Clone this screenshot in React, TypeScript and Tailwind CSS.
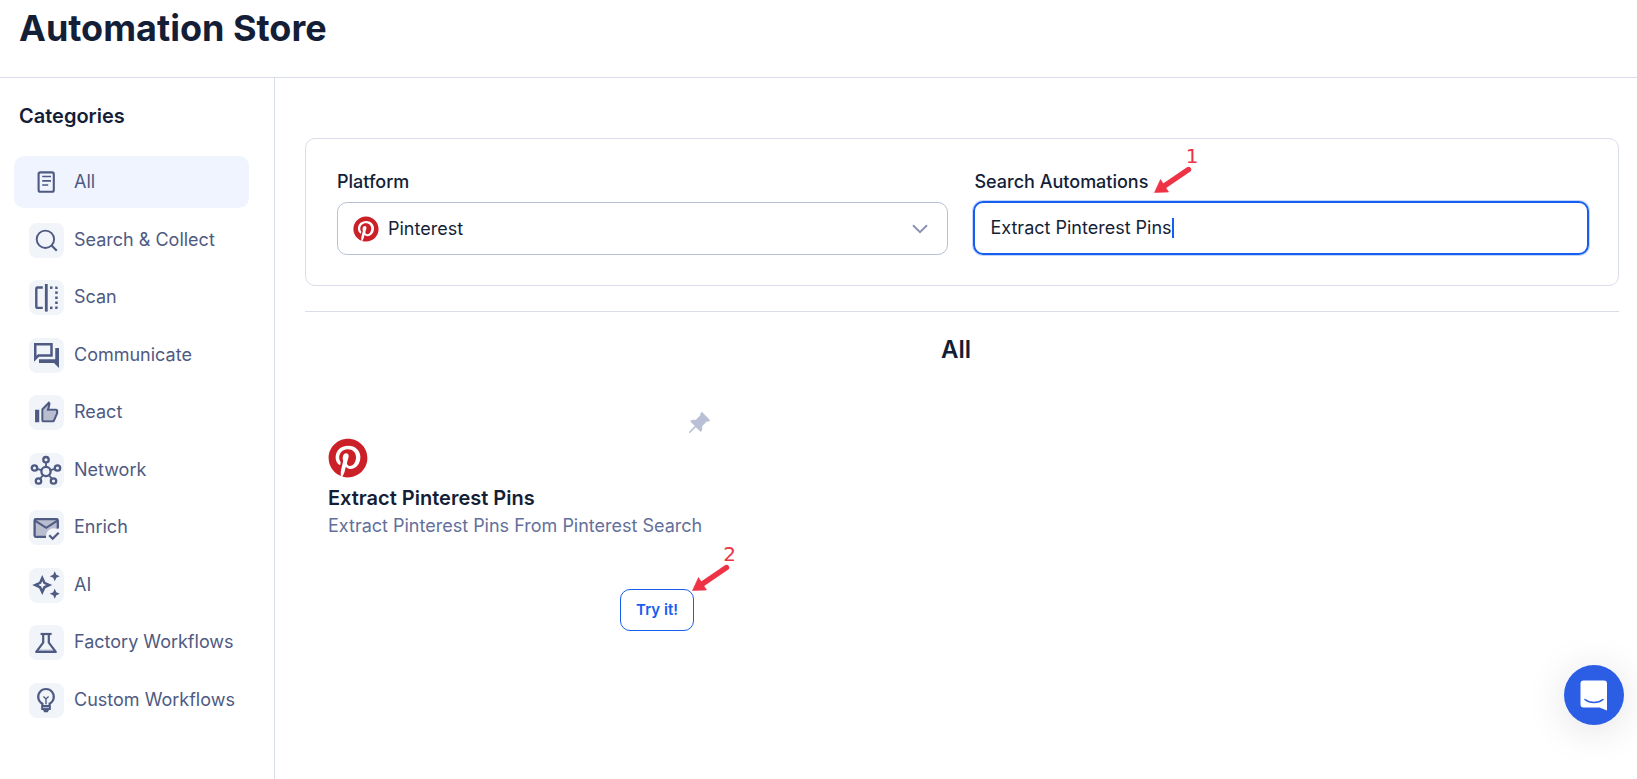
import { useState } from "react";
import type { ReactNode } from "react";
import { FaPinterest } from "react-icons/fa";
import { BsPinAngleFill } from "react-icons/bs";

const iconProps = {
  viewBox: "0 0 35 35",
  className: "size-[35px]",
  fill: "none",
  stroke: "currentColor",
  "aria-hidden": true,
} as const;

const ListIcon = () => (
  <svg {...iconProps} strokeWidth={2.1}>
    <rect x="9.6" y="7.4" width="15.2" height="19.4" rx="1.8" />
    <path d="M13.2 11.5h8.8M13.2 15.8h8.8M13.2 20h6" strokeWidth={1.7} />
  </svg>
);

const SearchIcon = () => (
  <svg {...iconProps} strokeWidth={1.9}>
    <circle cx="16.4" cy="16.3" r="8.7" />
    <path d="M22.6 22.5l5.2 5.2" strokeWidth={2.2} />
  </svg>
);

const ScanIcon = () => (
  <svg {...iconProps} strokeWidth={2.4}>
    <path d="M13.8 7.5H8.5a1.2 1.2 0 0 0-1.2 1.2v18a1.2 1.2 0 0 0 1.2 1.2h5.3" />
    <path d="M17.3 4v27.6" strokeWidth={2.8} />
    <g fill="currentColor" stroke="none">
      <rect x="21" y="6.4" width="2.5" height="2.5" />
      <rect x="21" y="26.6" width="2.5" height="2.5" />
      <path d="M26.2 6.4h1.2a1.3 1.3 0 0 1 1.3 1.3v1.2h-2.5z" />
      <rect x="26.2" y="11.4" width="2.5" height="2.5" />
      <rect x="26.2" y="16.5" width="2.5" height="2.5" />
      <rect x="26.2" y="21.5" width="2.5" height="2.5" />
      <path d="M26.2 29.1h1.2a1.3 1.3 0 0 0 1.3-1.3v-1.2h-2.5z" />
    </g>
  </svg>
);

const ForumIcon = () => (
  <svg {...iconProps} fill="currentColor" stroke="none">
    <path
      transform="translate(2.5 2.5) scale(1.25)"
      d="M15 4v7H5.17L4 12.17V4h11m2-2H2v15l4-4h11V2zm5 4h-3v9H6v3h12l4 4V6z"
    />
  </svg>
);

const ThumbIcon = () => (
  <svg {...iconProps} fill="currentColor" stroke="none">
    <g transform="translate(5 5.3) scale(1.05)">
      <path d="M21 12v-2h-9l1.34-5.34L9 9v10h9z" opacity=".35" />
      <path d="M9 21h9c.83 0 1.54-.5 1.84-1.22l3.02-7.05c.09-.23.14-.47.14-.73v-2c0-1.1-.9-2-2-2h-6.31l.95-4.57.03-.32c0-.41-.17-.79-.44-1.06L14.17 1 7.58 7.59C7.22 7.95 7 8.45 7 9v10c0 1.1.9 2 2 2zM9 9l4.34-4.34L12 10h9v2l-3 7H9V9zM1 9h4v12H1z" />
    </g>
  </svg>
);

const NetworkIcon = () => (
  <svg {...iconProps} strokeWidth={2.3}>
    <circle cx="17" cy="18.5" r="4.6" />
    <circle cx="17" cy="6.7" r="2.7" />
    <circle cx="5.5" cy="15" r="2.7" />
    <circle cx="28.5" cy="15" r="2.7" />
    <circle cx="9.5" cy="28" r="2.7" />
    <circle cx="24.5" cy="28" r="2.7" />
    <path d="M17 9.4v4.5M8 15.8l4.6 1.4M26 15.8l-4.6 1.4M11 25.8l3.2-3.8M23 25.8L19.8 22" strokeWidth={1.8} />
  </svg>
);

const EnrichIcon = () => (
  <svg {...iconProps}>
    <rect x="5.6" y="9.2" width="23.2" height="17.6" fill="currentColor" fillOpacity=".35" stroke="none" />
    <circle cx="24.8" cy="26" r="7.8" fill="#f1f4f9" stroke="none" />
    <path
      d="M17 26.8H6.8a1.2 1.2 0 0 1-1.2-1.2V10.4a1.2 1.2 0 0 1 1.2-1.2h20.8a1.2 1.2 0 0 1 1.2 1.2v8"
      strokeWidth={2.3}
    />
    <path d="M6 10.6l11.2 7.2 11.2-7.2" strokeWidth={2} />
    <path d="M20.2 25.2l3.5 3.5 6-6" strokeWidth={2.3} />
  </svg>
);

const SparkIcon = () => (
  <svg {...iconProps} fill="currentColor" stroke="none">
    <path
      transform="translate(2 2) scale(1.25)"
      d="M19 9l1.25-2.75L23 5l-2.75-1.25L19 1l-1.25 2.75L15 5l2.75 1.25L19 9zM19 15l-1.25 2.75L15 19l2.75 1.25L19 23l1.25-2.75L23 19l-2.75-1.25L19 15zM11.5 9.5L9 4 6.5 9.5 1 12l5.5 2.5L9 20l2.5-5.5L17 12l-5.5-2.5zM9.99 12.99L9 15.17l-.99-2.18L5.83 12l2.18-.99L9 8.83l.99 2.18 2.18.99-2.18.99z"
    />
  </svg>
);

const FlaskIcon = () => (
  <svg {...iconProps} strokeWidth={2.2}>
    <path d="M11.6 9h11" />
    <path d="M14.2 9.5v8.2L7.2 26.9h19.6l-7-9.2V9.5" strokeLinejoin="round" />
    <path d="M9 25.2h16" strokeWidth={1.4} strokeOpacity=".35" />
  </svg>
);

const BulbIcon = () => (
  <svg {...iconProps} strokeWidth={2.2}>
    <path d="M13.4 22.2v-1.5a7.8 7.8 0 1 1 7.2 0v1.5" />
    <path d="M14.4 13.6l2.6 2.3 2.6-2.3M17 15.9v5.3" strokeWidth={1.4} />
    <path d="M12.2 22h9.6v5H20l-1.2 2.3h-3.6L14 27h-1.8z" fill="currentColor" stroke="none" />
    <path d="M14 24.6h6" stroke="#f1f4f9" strokeOpacity=".7" strokeWidth={1} />
  </svg>
);

const categories: { name: string; icon: ReactNode }[] = [
  { name: "All", icon: <ListIcon /> },
  { name: "Search & Collect", icon: <SearchIcon /> },
  { name: "Scan", icon: <ScanIcon /> },
  { name: "Communicate", icon: <ForumIcon /> },
  { name: "React", icon: <ThumbIcon /> },
  { name: "Network", icon: <NetworkIcon /> },
  { name: "Enrich", icon: <EnrichIcon /> },
  { name: "AI", icon: <SparkIcon /> },
  { name: "Factory Workflows", icon: <FlaskIcon /> },
  { name: "Custom Workflows", icon: <BulbIcon /> },
];

function StepMarker({ step }: { step: number }) {
  return (
    <span className="pointer-events-none flex flex-col text-[#ee3345]">
      <span className="self-end font-['DejaVu_Sans',sans-serif] text-xl leading-[18px]">{step}</span>
      <svg viewBox="0 0 40 28" className="mr-1 h-7 w-10" aria-hidden="true">
        <path d="M34.5 4.5L11 20.5" stroke="currentColor" strokeWidth="5.4" strokeLinecap="round" />
        <path d="M0.5 27.5L6.5 14.5L14.5 27z" fill="currentColor" stroke="currentColor" strokeWidth="0.6" />
      </svg>
    </span>
  );
}

export default function App() {
  const [active, setActive] = useState("All");
  const [query, setQuery] = useState("Extract Pinterest Pins");

  return (
    <div className="flex min-h-screen flex-col bg-white font-['Inter',sans-serif] text-[#141e37]">
      <header className="border-b border-[#d9dce9] px-[19px] pt-2 pb-[29px]">
        <h1 className="text-4xl leading-10 font-bold">Automation Store</h1>
      </header>

      <div className="flex flex-1">
        <aside className="w-[275px] shrink-0 border-r border-[#d9dce9] pt-6 pr-[25px] pl-[14px]">
          <h2 className="pl-[5px] text-xl leading-7 font-semibold">Categories</h2>
          <nav className="mt-[26px] flex flex-col">
            {categories.map(({ name, icon }) => (
              <button
                key={name}
                type="button"
                onClick={() => setActive(name)}
                className={`flex h-[52px] items-center gap-[10px] rounded-[10px] pl-[15px] text-left text-lg text-[#4e5a82] odd:mb-[6px] even:mb-[5px] ${
                  active === name ? "bg-[#eff4ff]" : "bg-white"
                }`}
              >
                <span className={`rounded-lg text-[#4e5a82] ${active === name ? "" : "bg-[#f1f4f9]"}`}>{icon}</span>
                {name}
              </button>
            ))}
          </nav>
        </aside>

        <main className="min-w-0 flex-1">
          <div className="pt-[60px] pr-[18px] pl-[30px]">
            <form
              className="grid grid-cols-[611fr_615fr] gap-[25px] rounded-[10px] border border-[#d9dce9] py-[30px] pr-[29px] pl-[31px]"
              onSubmit={(e) => e.preventDefault()}
            >
              <div className="flex flex-col gap-[7px]">
                <label htmlFor="platform" className="text-lg leading-[26px] font-medium">
                  Platform
                </label>
                <div className="relative">
                  <FaPinterest className="pointer-events-none absolute top-[14px] left-4 size-[26px] text-[#cb2027]" />
                  <select
                    id="platform"
                    className="h-[53px] w-full appearance-none rounded-[10px] border border-[#b9c0d6] bg-transparent pl-[50px] text-lg"
                  >
                    <option>Pinterest</option>
                  </select>
                  <svg
                    viewBox="0 0 16 10"
                    className="pointer-events-none absolute top-[22px] right-5 h-[10px] w-4 text-[#8a94b2]"
                    fill="none"
                    stroke="currentColor"
                    strokeWidth="2"
                    aria-hidden="true"
                  >
                    <path d="M1 1.2l7 7 7-7" />
                  </svg>
                </div>
              </div>

              <div className="flex flex-col gap-[6px]">
                <div className="relative self-start">
                  <label htmlFor="search" className="block pl-px text-lg leading-[26px] font-medium">
                    Search Automations
                  </label>
                  <div className="absolute -top-[22px] left-full ml-[6px]">
                    <StepMarker step={1} />
                  </div>
                </div>
                <div className="flex h-[54px] items-center rounded-[10px] border-2 border-[#175df0] px-[15px] ring-1 ring-[#175df0]/25">
                  <input
                    id="search"
                    type="text"
                    value={query}
                    onChange={(e) => setQuery(e.target.value)}
                    className="field-sizing-content bg-transparent text-lg caret-transparent outline-none"
                  />
                  <span className="h-5 w-[2px] bg-[#175df0]" />
                </div>
              </div>
            </form>
            <hr className="mt-[25px] border-[#d9dce9]" />
          </div>

          <h2 className="mt-6 text-center text-2xl leading-7 font-semibold">{active}</h2>

          <article className="mt-[47px] ml-[53px] flex w-[383px] flex-col">
            <button type="button" aria-label="Pin automation" className="self-end text-[#b9c0d6]">
              <BsPinAngleFill className="size-6" />
            </button>
            <FaPinterest className="mt-[3px] size-10 text-[#cb2027]" />
            <h3 className="mt-[6px] text-xl leading-7 font-semibold">Extract Pinterest Pins</h3>
            <p className="text-lg leading-7 text-[#63709a]">Extract Pinterest Pins From Pinterest Search</p>
            <div className="relative mt-[49px] mr-[17px] self-end">
              <button
                type="button"
                className="h-[42px] rounded-[10px] border border-[#175df0] px-[15px] text-[15px] font-semibold text-[#175df0]"
              >
                Try it!
              </button>
              <div className="absolute bottom-full left-full -mb-[2px] -ml-[2px]">
                <StepMarker step={2} />
              </div>
            </div>
          </article>
        </main>
      </div>

      <button
        type="button"
        aria-label="Open chat"
        className="fixed right-[13px] bottom-[54px] flex size-[60px] items-center justify-center rounded-full bg-[#2b5ee5] shadow-[0_5px_40px_rgba(0,0,0,0.12)]"
      >
        <svg viewBox="0 0 28 32" className="h-8 w-7" aria-hidden="true">
          <path d="M3.5 1.5h20.500a3 3 0 0 1 3 3V31.5l-7.500-3H3.500a3 3 0 0 1-3-3v-21a3 3 0 0 1 3-3z" fill="#fff" />
          <path d="M5 20.500c5 4 13 4 18 0" fill="none" stroke="#2b5ee5" strokeWidth="1.6" strokeLinecap="round" />
        </svg>
      </button>
    </div>
  );
}
